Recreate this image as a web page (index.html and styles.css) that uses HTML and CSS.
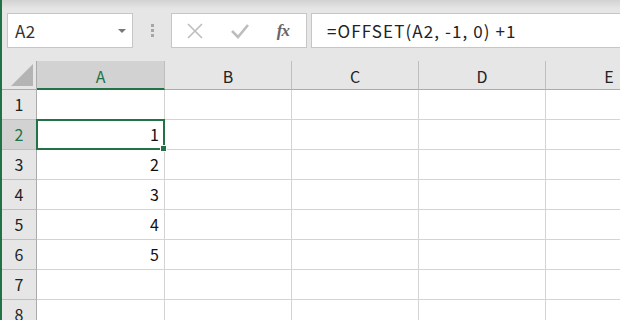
FILE: index.html
```html
<!DOCTYPE html>
<html>
<head>
    <link rel="stylesheet" href="styles.css">
</head>
<body>
    <div class="window">
        <div class="toolbar">
            <div class="namebox">
                <span class="name">A2</span>
                <span class="arrow"></span>
            </div>
            <div class="grip"><i></i><i></i><i></i></div>
            <div class="buttons">
                <svg width="18" height="18" viewBox="0 0 18 18"><path d="M2 2 L16 16 M16 2 L2 16" stroke="#bdbdbd" stroke-width="1.6" fill="none"/></svg>
                <svg width="20" height="18" viewBox="0 0 20 18"><path d="M2 9 L8 15 L18 3" stroke="#bdbdbd" stroke-width="2.6" fill="none"/></svg>
                <span class="fx">fx</span>
            </div>
            <div class="formula">=OFFSET(A2, -1, 0) +1</div>
        </div>
        <div class="sheet">
            <div class="corner"><span class="tri"></span></div>
            <div class="colhead active">A</div>
            <div class="colhead">B</div>
            <div class="colhead">C</div>
            <div class="colhead">D</div>
            <div class="colhead">E</div>

            <div class="rowhead">1</div>
            <div class="cell"></div><div class="cell"></div><div class="cell"></div><div class="cell"></div><div class="cell"></div>

            <div class="rowhead active">2</div>
            <div class="cell selected">1</div><div class="cell"></div><div class="cell"></div><div class="cell"></div><div class="cell"></div>

            <div class="rowhead">3</div>
            <div class="cell">2</div><div class="cell"></div><div class="cell"></div><div class="cell"></div><div class="cell"></div>

            <div class="rowhead">4</div>
            <div class="cell">3</div><div class="cell"></div><div class="cell"></div><div class="cell"></div><div class="cell"></div>

            <div class="rowhead">5</div>
            <div class="cell">4</div><div class="cell"></div><div class="cell"></div><div class="cell"></div><div class="cell"></div>

            <div class="rowhead">6</div>
            <div class="cell">5</div><div class="cell"></div><div class="cell"></div><div class="cell"></div><div class="cell"></div>

            <div class="rowhead">7</div>
            <div class="cell"></div><div class="cell"></div><div class="cell"></div><div class="cell"></div><div class="cell"></div>

            <div class="rowhead">8</div>
            <div class="cell"></div><div class="cell"></div><div class="cell"></div><div class="cell"></div><div class="cell"></div>
        </div>
    </div>
</body>
</html>
```

FILE: styles.css
```css
body {
    margin: 0;
    width: 620px;
    height: 320px;
    overflow: hidden;
    background-color: #ffffff;
    font-family: "Noto Sans CJK JP", "Liberation Sans", sans-serif;
}
.window {
    border-left: 2px solid #217346;
    height: 320px;
    overflow: hidden;
}
.toolbar {
    height: 61px;
    display: flex;
    align-items: flex-start;
    padding-top: 13px;
    box-sizing: border-box;
    background: linear-gradient(#d2d2d2 0px, #e6e6e6 9px, #e6e6e6 100%);
}
.namebox {
    margin-left: 5px;
    width: 126px;
    height: 35px;
    box-sizing: border-box;
    border: 1px solid #c6c6c6;
    background-color: #ffffff;
    display: flex;
    align-items: center;
    justify-content: space-between;
    padding: 0 6px 0 7px;
}
.name {
    font-size: 17px;
    color: #333;
    letter-spacing: 0.5px;
}
.arrow {
    width: 0;
    height: 0;
    border-left: 4px solid transparent;
    border-right: 4px solid transparent;
    border-top: 4px solid #777;
    margin-top: 1px;
}
.grip {
    width: 38px;
    height: 35px;
    display: flex;
    flex-direction: column;
    align-items: center;
    justify-content: center;
    gap: 2px;
}
.grip i {
    width: 3px;
    height: 3px;
    background-color: #a6a6a6;
}
.buttons {
    width: 136px;
    height: 35px;
    box-sizing: border-box;
    border: 1px solid #c6c6c6;
    background-color: #ffffff;
    display: flex;
    align-items: center;
    justify-content: space-between;
    padding: 0 17px 0 14px;
}
.fx {
    font-family: "Liberation Serif", serif;
    font-style: italic;
    font-weight: bold;
    font-size: 17px;
    color: #666;
    letter-spacing: -1px;
}
.formula {
    margin-left: 4px;
    flex: 1;
    height: 35px;
    box-sizing: border-box;
    border: 1px solid #c6c6c6;
    border-right: none;
    background-color: #ffffff;
    font-size: 17px;
    letter-spacing: 1.1px;
    color: #222;
    padding-left: 15px;
    line-height: 33px;
}
.sheet {
    display: grid;
    grid-template-columns: 35px 128px 127px 127px 127px 127px;
    grid-template-rows: 29px repeat(8, 30px);
}
.corner {
    background-color: #e6e6e6;
    border-right: 1px solid #ababab;
    border-bottom: 1px solid #ababab;
    box-sizing: border-box;
    display: flex;
    align-items: flex-end;
    justify-content: flex-end;
    padding: 0 3px 3px 0;
}
.tri {
    width: 0;
    height: 0;
    border-left: 22px solid transparent;
    border-bottom: 22px solid #b4b4b4;
}
.colhead {
    background-color: #e6e6e6;
    border-right: 1px solid #bfbfbf;
    border-bottom: 1px solid #ababab;
    box-sizing: border-box;
    text-align: center;
    font-size: 16px;
    line-height: 30px;
    color: #222;
}
.colhead.active {
    background-color: #d2d2d2;
    border-bottom: 2px solid #217346;
    color: #217346;
}
.rowhead {
    background-color: #e6e6e6;
    border-right: 1px solid #ababab;
    border-bottom: 1px solid #bfbfbf;
    box-sizing: border-box;
    text-align: center;
    font-size: 16px;
    line-height: 29px;
    color: #222;
}
.rowhead.active {
    background-color: #d2d2d2;
    color: #217346;
}
.cell {
    border-right: 1px solid #d4d4d4;
    border-bottom: 1px solid #d4d4d4;
    box-sizing: border-box;
    text-align: right;
    font-size: 16px;
    line-height: 29px;
    padding-right: 5px;
    color: #111;
}
.selected {
    position: relative;
}
.selected::after {
    content: "";
    position: absolute;
    left: -1px;
    top: -1px;
    right: -1px;
    bottom: -1px;
    border: 2px solid #217346;
}
.selected::before {
    content: "";
    position: absolute;
    right: -3px;
    bottom: -3px;
    width: 5px;
    height: 5px;
    background-color: #217346;
    border: 1px solid #ffffff;
    z-index: 1;
}
```
